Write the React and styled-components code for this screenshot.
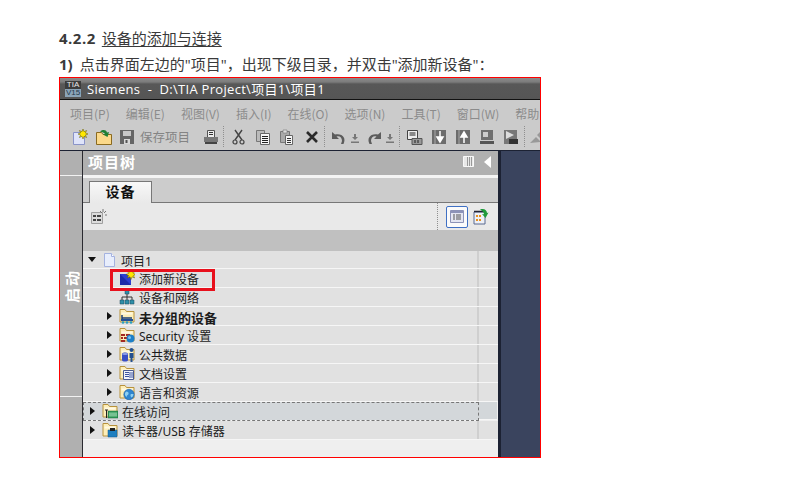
import React from "react";
import styled, { createGlobalStyle } from "styled-components";

const Global = createGlobalStyle`
  html, body { margin: 0; padding: 0; background: #fff; }
  body { font-family: "Open Sans", "Noto Sans CJK SC", sans-serif; }
`;

const Page = styled.div`
  width: 789px;
  height: 482px;
  padding: 29px 0 0 59px;
  box-sizing: border-box;
  overflow: hidden;
  color: #3a3a3a;
`;
const Heading = styled.div`
  font-size: 15px;
  line-height: 18px;
  height: 18px;
  white-space: nowrap;
  b { font-weight: 700; margin-right: 6px; letter-spacing: 0.5px; }
  span { text-decoration: underline; text-underline-offset: 2px; text-decoration-thickness: 1px; }
`;
const Step = styled.div`
  font-size: 15px;
  line-height: 18px;
  height: 18px;
  margin-top: 8px;
  white-space: nowrap;
  b { font-weight: 700; margin-right: 7px; }
`;
const Shot = styled.div`
  width: 482px;
  height: 381px;
  margin-top: 4px;
  box-sizing: border-box;
  border: 1px solid #f00;
  border-right-width: 1.5px;
  display: flex;
  flex-direction: column;
  overflow: hidden;
  background: #cbcbcb;
`;
const TitleBar = styled.div`
  height: 21px;
  flex: none;
  display: flex;
  align-items: center;
  padding-left: 5px;
  gap: 6px;
  background: linear-gradient(#8a8a8a 0, #7c7c7c 4px, #585858 6px, #555 100%);
  border-bottom: 1px solid #111;
  color: #fff;
  font-size: 13px;
  letter-spacing: 0.3px;
  white-space: nowrap;
  overflow: hidden;
`;
const TiaLogo = styled.div`
  width: 16px;
  height: 16px;
  flex: none;
  background: linear-gradient(#3c3c3c 50%, #8ba4b8 50%);
  color: #e8e8e8;
  font: 8px/8px "Liberation Sans", sans-serif;
  letter-spacing: 0;
  text-align: center;
  span { color: #24384c; }
`;
const MenuBar = styled.div`
  height: 26px;
  flex: none;
  display: flex;
  align-items: center;
  padding-left: 10px;
  gap: 16px;
  font-size: 12px;
  color: #8b8b8b;
  white-space: nowrap;
  overflow: hidden;
  span { font-family: "Noto Sans CJK SC", sans-serif; }
`;
const ToolBar = styled.div`
  height: 25px;
  flex: none;
  display: flex;
  align-items: center;
  padding: 0 0 3px 12px;
  box-sizing: border-box;
  border-bottom: 1px solid #1c2233;
  overflow: hidden;
`;
const ToolIcon = styled.svg`
  width: ${(p) => (p.$small ? 8 : 16)}px;
  height: 16px;
  flex: none;
  margin-right: ${(p) => p.$gap ?? 8}px;
`;
const ToolText = styled.div`
  font-family: "Noto Sans CJK SC", sans-serif;
  font-size: 12.5px;
  color: #848484;
  margin: 0 13px 0 5px;
  white-space: nowrap;
`;
const ToolSep = styled.div`
  width: 0;
  height: 21px;
  border-left: 1px dotted #8f8f8f;
  margin-right: ${(p) => p.$right}px;
  flex: none;
`;
const Workspace = styled.div`
  flex: 1;
  display: flex;
  min-height: 0;
`;
const SideRail = styled.div`
  width: 22px;
  flex: none;
  padding-top: 24px;
  background: #b0b0b0;
  border-right: 1px solid #2a2a30;
  display: flex;
  flex-direction: column;
`;
const RailLine = styled.div`
  height: 1px;
  background: #f2f2f2;
  flex: none;
`;
const RailLabel = styled.div`
  height: 220px;
  flex: none;
  display: flex;
  align-items: center;
  justify-content: center;
  writing-mode: vertical-rl;
  text-orientation: sideways;
  transform: rotate(180deg);
  color: #fff;
  font-family: "Noto Sans CJK SC", sans-serif;
  font-size: 15px;
  font-weight: 700;
  letter-spacing: 2px;
`;
const TreePanel = styled.div`
  width: 415px;
  flex: none;
  display: flex;
  flex-direction: column;
  min-height: 0;
  background: #efefef;
`;
const PanelHead = styled.div`
  height: 21px;
  flex: none;
  background: #b0b0b0;
  border-bottom: 3px solid #f4f4f4;
  display: flex;
  align-items: center;
  justify-content: space-between;
  padding: 0 7px 3px 5px;
  color: #fff;
  font-family: "Noto Sans CJK SC", sans-serif;
  font-size: 15px;
  font-weight: 700;
  letter-spacing: 1px;
`;
const HeadIcons = styled.div`
  display: flex;
  align-items: center;
  gap: 10px;
`;
const TabStrip = styled.div`
  height: 24px;
  flex: none;
  background: #cccccc;
  border-bottom: 1px solid #777;
  padding-left: 6px;
  display: flex;
  align-items: flex-end;
`;
const Tab = styled.div`
  width: 63px;
  height: 22px;
  margin-bottom: -1px;
  box-sizing: border-box;
  border: 1px solid #777;
  border-bottom: none;
  background: linear-gradient(#f8f8f8, #e9e9e9);
  color: #111;
  font-family: "Noto Sans CJK SC", sans-serif;
  font-size: 14px;
  font-weight: 700;
  letter-spacing: 1px;
  line-height: 19px;
  text-align: center;
`;
const PanelTools = styled.div`
  height: 27px;
  flex: none;
  background: #e9e9e9;
  display: flex;
  align-items: center;
  justify-content: space-between;
  padding: 0 9px 0 7px;
`;
const ViewToggle = styled.div`
  width: 22px;
  height: 22px;
  box-sizing: border-box;
  border: 1.5px solid #3f70c4;
  border-radius: 2px;
  background: #fbfbfb;
  display: flex;
  align-items: center;
  justify-content: center;
`;
const ToggleGroup = styled.div`
  display: flex;
  align-items: center;
  height: 100%;
  gap: 5px;
`;
const DottedRule = styled.div`
  height: 100%;
  border-left: 1px dotted #8f8f8f;
  margin-right: 3px;
`;
const ColumnHead = styled.div`
  height: 21px;
  flex: none;
  background: #c0c0c0;
`;
const Tree = styled.div`
  flex: 1;
  min-height: 0;
  display: flex;
  flex-direction: column;
`;
const Row = styled.div`
  height: ${(p) => (p.$short ? 18 : 19)}px;
  flex: none;
  box-sizing: border-box;
  display: flex;
  align-items: center;
  position: relative;
  padding-left: ${(p) => p.$indent}px;
  background: ${(p) => (p.$online ? "#d3d7da" : "#e1e1e1")};
  border-bottom: 1px solid #f6f6f6;
  font-family: "Noto Sans", "Noto Sans CJK SC", sans-serif;
  font-size: ${(p) => (p.$bold ? 13 : 12)}px;
  font-weight: ${(p) => (p.$bold ? 700 : 400)};
  color: #1c1c1c;
  white-space: nowrap;
  ${(p) => p.$online && "outline: 1px dashed #777; outline-offset: -1px; margin-right: 19px;"}
  &::after {
    content: "";
    display: ${(p) => (p.$online ? "none" : "block")};
    position: absolute;
    top: 0;
    bottom: 0;
    right: 19px;
    width: 2px;
    background: #cfcfcf;
  }
`;
const RowLabel = styled.span`
  position: relative;
  top: 1px;
`;
const Arrow = styled.span`
  width: 0;
  height: 0;
  flex: none;
  ${(p) =>
    p.$open
      ? "border-left: 4px solid transparent; border-right: 4px solid transparent; border-top: 5px solid #111; margin-right: 5px;"
      : "border-top: 4.5px solid transparent; border-bottom: 4.5px solid transparent; border-left: 5px solid #111; margin-right: 7px;"}
`;
const RowIcon = styled.svg`
  width: 16px;
  height: 16px;
  flex: none;
  margin-right: 4px;
`;
const Highlight = styled.div`
  position: absolute;
  left: 27px;
  top: 0;
  width: 105px;
  height: 22px;
  border: 3px solid #e8101c;
  box-sizing: border-box;
  z-index: 2;
`;
const OnlineTail = styled.div`
  position: absolute;
  top: 0;
  bottom: 0;
  right: -18px;
  width: 18px;
  background: #d3d7da;
  border-bottom: 1px solid #f6f6f6;
`;
const Editor = styled.div`
  flex: 1;
  background: #3a445e;
  border-left: 3px solid #1c2233;
`;

const Burst = ({ x, y }) => (
  <path
    transform={`translate(${x} ${y})`}
    d="M0-4.5l1 2.7 2.6-1.2-1.2 2.5L5 .5l-2.6 1 1.2 2.5L1 2.8 0 5.5l-1-2.7-2.6 1.2 1.2-2.5L-5 .5l2.6-1-1.2-2.5L-1-1.8z"
    fill="#ffe800"
    stroke="#5a5200"
    strokeWidth=".5"
  />
);

const Folder = ({ children }) => (
  <RowIcon viewBox="0 0 16 16">
    <path d="M1 14V1.500h5l1.500 2h7.500V14z" fill="#fdeeb8" stroke="#b8923c" />
    <path d="M2.500 4.500h11v2h-11z" fill="#fff9e2" />
    {children}
  </RowIcon>
);

const rows = [
  {
    label: "未分组的设备",
    bold: true,
    icon: (
      <>
        <path d="M3 7v6M3 10h10" stroke="#1c3f74" strokeWidth="1.500" />
        <path d="M2 11h12v2H2z" fill="#244f94" />
        <circle cx="4" cy="14.500" r="1.300" fill="#2aa0c0" />
        <circle cx="8" cy="14.500" r="1.300" fill="#2aa0c0" />
        <circle cx="12" cy="14.500" r="1.300" fill="#2aa0c0" />
      </>
    ),
  },
  {
    label: "Security 设置",
    icon: (
      <>
        <path d="M2 7h4v2H2zM7 7h4v2H7zM2 10h2v2H2zM5 10h4v2H5zM2 13h4v2H2z" fill="#a32a22" />
        <circle cx="11.500" cy="11.500" r="4" fill="#1d7fc8" />
        <circle cx="10.500" cy="10.500" r="1.500" fill="#7cc4ee" />
      </>
    ),
  },
  {
    label: "公共数据",
    icon: (
      <>
        <path d="M3 8c0-2 6-2 6 0v6c0 2-6 2-6 0z" fill="#3a4fc4" />
        <ellipse cx="6" cy="8" rx="3" ry="1" fill="#8fa0ea" />
        <circle cx="12.500" cy="4" r="2" fill="#24508f" />
        <path d="M10.500 7h4v5h-1v4h-2v-4h-1z" fill="#24508f" />
      </>
    ),
  },
  {
    label: "文档设置",
    icon: (
      <>
        <path d="M4.500 5.500h10v9h-10z" fill="#f2f4fb" stroke="#4a5a90" />
        <path d="M6 7.500h4M6 9.500h4M6 11.500h4M11 7v6M13 7v6" stroke="#3e54a0" />
      </>
    ),
  },
  {
    label: "语言和资源",
    icon: (
      <>
        <circle cx="10" cy="10.500" r="5.200" fill="#2f86d0" stroke="#1c5da0" strokeWidth=".6" />
        <path d="M7 7.500c2 0 3 1 2.500 2.500S7.500 11 8 13c-2-1-3-3-1-5.500zM12 10h2.500c0 2-1 3-2 3.500-1-1-1.500-2.500-.5-3.500z" fill="#8fd0f2" />
      </>
    ),
  },
];

export default function App() {
  return (
    <Page>
      <Global />
      <Heading>
        <b>4.2.2</b>
        <span>设备的添加与连接</span>
      </Heading>
      <Step>
        <b>1)</b>点击界面左边的"项目"，出现下级目录，并双击"添加新设备"：
      </Step>
      <Shot>
        <TitleBar>
          <TiaLogo>
            TIA
            <br />
            <span>V15</span>
          </TiaLogo>
          Siemens&nbsp; - &nbsp;D:\TIA Project\项目1\项目1
        </TitleBar>
        <MenuBar>
          <span>项目(P)</span>
          <span>编辑(E)</span>
          <span>视图(V)</span>
          <span>插入(I)</span>
          <span>在线(O)</span>
          <span>选项(N)</span>
          <span>工具(T)</span>
          <span>窗口(W)</span>
          <span>帮助</span>
        </MenuBar>
        <ToolBar>
          <ToolIcon viewBox="0 0 16 16">
            <path d="M1.500 3.500h11v12h-11z" fill="#dfe4fa" stroke="#8a94c8" />
            <Burst x={11} y={4.500} />
          </ToolIcon>
          <ToolIcon viewBox="0 0 16 16" $gap={7}>
            <path d="M.5 3.500h5l1.500 2h8.500v10H.5z" fill="#fbd98a" stroke="#8a6a20" />
            <path d="M4 2.500c3-2 6-2 7 1l2-.5-1.500 5-4.500-2.500 2-.5c-1-1.500-3-1.500-5-2.500z" fill="#1f7f34" />
          </ToolIcon>
          <ToolIcon viewBox="0 0 16 16" $gap={0}>
            <path d="M1 1h14v14H1z" fill="#666" />
            <path d="M4 2h8v5H4z" fill="#c8c8c8" />
            <path d="M5 10h6v5H5z" fill="#d8d8d8" />
            <path d="M6.500 11h2v3h-2z" fill="#555" />
          </ToolIcon>
          <ToolText>保存项目</ToolText>
          <ToolIcon viewBox="0 0 16 16" $gap={4}>
            <path d="M4.500 1.500h7v7h-7z" fill="#eee" stroke="#555" />
            <path d="M1 8h14v5H1z" fill="#777" />
            <path d="M2 13h12v2H2z" fill="#444" />
            <path d="M6 3.500h4M6 5.500h4" stroke="#333" />
          </ToolIcon>
          <ToolSep $right={8} />
          <ToolIcon viewBox="0 0 16 16" $gap={7}>
            <path d="M3 1l7 10M10 1L3 11" stroke="#444" strokeWidth="1.400" />
            <circle cx="3" cy="13" r="2" fill="none" stroke="#444" strokeWidth="1.200" />
            <circle cx="10" cy="13" r="2" fill="none" stroke="#444" strokeWidth="1.200" />
          </ToolIcon>
          <ToolIcon viewBox="0 0 16 16">
            <path d="M1.500 1.500h8v11h-8z" fill="#bbb" stroke="#777" />
            <path d="M5.500 4.500h9v11h-9z" fill="#f6f6f6" stroke="#666" />
            <path d="M7 7.500h6M7 9.500h6M7 11.500h6M7 13.500h6" stroke="#222" />
          </ToolIcon>
          <ToolIcon viewBox="0 0 16 16" $gap={9}>
            <path d="M1.500 2.500h9v11h-9z" fill="#aaa" stroke="#777" />
            <path d="M4 1h4v3H4z" fill="#ddd" stroke="#777" strokeWidth=".6" />
            <path d="M6.500 6.500h7v9h-7z" fill="#f6f6f6" stroke="#666" />
            <path d="M8 9.500h4M8 11.500h4M8 13.500h4" stroke="#333" />
          </ToolIcon>
          <ToolIcon viewBox="0 0 16 16" $gap={4}>
            <path d="M3 3l10 10M13 3L3 13" stroke="#2a2a2a" strokeWidth="2.600" />
          </ToolIcon>
          <ToolSep $right={6} />
          <ToolIcon viewBox="0 0 16 16" $gap={4}>
            <path d="M1 3v7h7L5.500 7.500C8 6.500 11 7.500 11 12l-1 3h2.500c3-6-1-11-8.500-9.500z" fill="#5c5c5c" />
          </ToolIcon>
          <ToolIcon viewBox="0 0 8 16" $small $gap={7}>
            <path d="M3 5h2v3h2L4 11 1 8h2zM0 12.500h8V14H0z" fill="#777" />
          </ToolIcon>
          <ToolIcon viewBox="0 0 16 16" $gap={4}>
            <path d="M15 3v7H8l2.500-2.500C8 6.500 5 7.500 5 12l1 3H3.500C.5 9 4.500 4 12 5.500z" fill="#5c5c5c" />
          </ToolIcon>
          <ToolIcon viewBox="0 0 8 16" $small $gap={5}>
            <path d="M3 5h2v3h2L4 11 1 8h2zM0 12.500h8V14H0z" fill="#777" />
          </ToolIcon>
          <ToolSep $right={7} />
          <ToolIcon viewBox="0 0 16 16">
            <path d="M.5 1.500h10v9H.5z" fill="#eee" stroke="#444" />
            <path d="M5 9.500h10v6H5z" fill="#999" stroke="#555" />
            <path d="M2.500 4h6M2.500 6h6M8 11v3M11 11v3" stroke="#222" />
          </ToolIcon>
          <ToolIcon viewBox="0 0 16 16">
            <path d="M1 1h14v14H1z" fill="#6c6c6c" />
            <path d="M4 1v14" stroke="#aaa" />
            <path d="M9 2v8M6 8l3 5 3-5z" stroke="#fff" fill="#fff" strokeWidth="1.500" />
          </ToolIcon>
          <ToolIcon viewBox="0 0 16 16">
            <path d="M1 1h14v14H1z" fill="#6c6c6c" />
            <path d="M4 1v14" stroke="#aaa" />
            <path d="M9 14V6M6 8l3-5 3 5z" stroke="#fff" fill="#fff" strokeWidth="1.500" />
          </ToolIcon>
          <ToolIcon viewBox="0 0 16 16">
            <path d="M2 1h12v10H2z" fill="#6f6f6f" />
            <path d="M4 3h5v5H4z" fill="#ccc" />
            <path d="M1 12h14v3H1z" fill="#555" />
          </ToolIcon>
          <ToolIcon viewBox="0 0 16 16" $gap={5}>
            <path d="M1 1h13v14H1z" fill="#777" />
            <path d="M3 2l8 4-8 4z" fill="#ddd" />
            <path d="M6 10h9v5H6z" fill="#333" />
          </ToolIcon>
          <ToolSep $right={4} />
          <ToolIcon viewBox="0 0 16 16" $gap={0}>
            <path d="M1 14l6-6 5 5zM8 6l4-4 3 3-4 4z" fill="#999" />
          </ToolIcon>
        </ToolBar>
        <Workspace>
          <SideRail>
            <RailLine />
            <RailLabel>启动</RailLabel>
            <RailLine />
          </SideRail>
          <TreePanel>
            <PanelHead>
              <span>项目树</span>
              <HeadIcons>
                <svg width="11" height="11" viewBox="0 0 11 11">
                  <path d="M.5.5h10v10H.5z" fill="#e8e8e8" stroke="#f8f8f8" />
                  <path d="M4.500 1v9M6.500 1v9M8.500 1v9" stroke="#999" />
                </svg>
                <svg width="7" height="12" viewBox="0 0 7 12">
                  <path d="M7 0v12L0 6z" fill="#fff" />
                </svg>
              </HeadIcons>
            </PanelHead>
            <TabStrip>
              <Tab>设备</Tab>
            </TabStrip>
            <PanelTools>
              <svg width="17" height="17" viewBox="0 0 17 17">
                <path d="M1.500 4.500h11v11h-11z" fill="#dcdcdc" stroke="#a0a0a0" />
                <path d="M3 7h3v2H3zM7 7h4v2H7zM3 11h3v2H3zM7 11h4v2H7z" fill="#444" />
                <path d="M13 1v3M10 3l2 2M16 3l-2 2M15 7h2" stroke="#777" />
              </svg>
              <ToggleGroup>
                <DottedRule />
                <ViewToggle>
                  <svg width="14" height="13" viewBox="0 0 14 13">
                    <path d="M.5.5h13v12H.5z" fill="#e4e6f2" stroke="#8d93b8" />
                    <path d="M1 2h12" stroke="#8d93b8" strokeWidth="2" />
                    <path d="M3 5h2M6 5h5M3 7h2M6 7h5M3 9h2M6 9h5" stroke="#555" />
                  </svg>
                </ViewToggle>
                <svg width="16" height="17" viewBox="0 0 16 17">
                  <path d="M1 4h11v12H1z" fill="#eef0f6" stroke="#5a6a90" />
                  <path d="M1 3.500h11" stroke="#223" strokeWidth="1.500" />
                  <path d="M3 7h2v2H3zM6 7h2v2H6zM3 11h2v2H3zM6 11h2v2H6z" fill="#e8901c" />
                  <path d="M7 1.500c4-1.500 7 .5 7 3.500l1.500-.5L12.500 10 9 6l2 .2C11 4 9 3 7 1.500z" fill="#1f9a3a" />
                </svg>
              </ToggleGroup>
            </PanelTools>
            <ColumnHead />
            <Tree>
              <Row $indent={5} $short>
                <Arrow $open />
                <RowIcon viewBox="0 0 16 16">
                  <path d="M3.500 1.500h7l3 3v10h-10z" fill="#e8eefc" stroke="#a4b2e0" />
                  <path d="M10.500 1.500v3h3" fill="#fff" stroke="#a4b2e0" />
                </RowIcon>
                <RowLabel>项目1</RowLabel>
              </Row>
              <Row $indent={36}>
                <RowIcon viewBox="0 0 16 16">
                  <path d="M1 4h11v11H1z" fill="#2c3fd0" />
                  <path d="M1 4l11 11H1z" fill="#1c2aa8" />
                  <Burst x={12} y={4} />
                </RowIcon>
                <RowLabel>添加新设备</RowLabel>
                <Highlight />
              </Row>
              <Row $indent={36}>
                <RowIcon viewBox="0 0 16 16">
                  <path d="M6 1h4v4H6zM1 11h4v4H1zM6 11h4v4H6zM11 11h4v4h-4z" fill="#2f8fa8" stroke="#1c4a5c" strokeWidth=".5" />
                  <path d="M8 5v3M3 11V8h10v3M8 8v3" stroke="#333" fill="none" />
                </RowIcon>
                <RowLabel>设备和网络</RowLabel>
              </Row>
              {rows.map((r) => (
                <Row key={r.label} $indent={24} $bold={r.bold}>
                  <Arrow />
                  <Folder>{r.icon}</Folder>
                  <RowLabel>{r.label}</RowLabel>
                </Row>
              ))}
              <Row $indent={7} $online>
                <Arrow />
                <Folder>
                  <path d="M6 8h10v7H6z" fill="#2f9a5a" stroke="#1c6a3c" strokeWidth=".5" />
                  <path d="M8 9.500v4M10 9.500v4M12 9.500v4M14 9.500v4" stroke="#bfe8cc" />
                  <path d="M3 7h3M4.500 7v8" stroke="#222" />
                </Folder>
                <RowLabel>在线访问</RowLabel>
                <OnlineTail />
              </Row>
              <Row $indent={7}>
                <Arrow />
                <Folder>
                  <path d="M6 8h9v7H6z" fill="#1f7fc0" stroke="#155a8c" strokeWidth=".5" />
                  <path d="M8 6h5v3H8z" fill="#222" />
                </Folder>
                <RowLabel>读卡器/USB 存储器</RowLabel>
              </Row>
            </Tree>
          </TreePanel>
          <Editor />
        </Workspace>
      </Shot>
    </Page>
  );
}
